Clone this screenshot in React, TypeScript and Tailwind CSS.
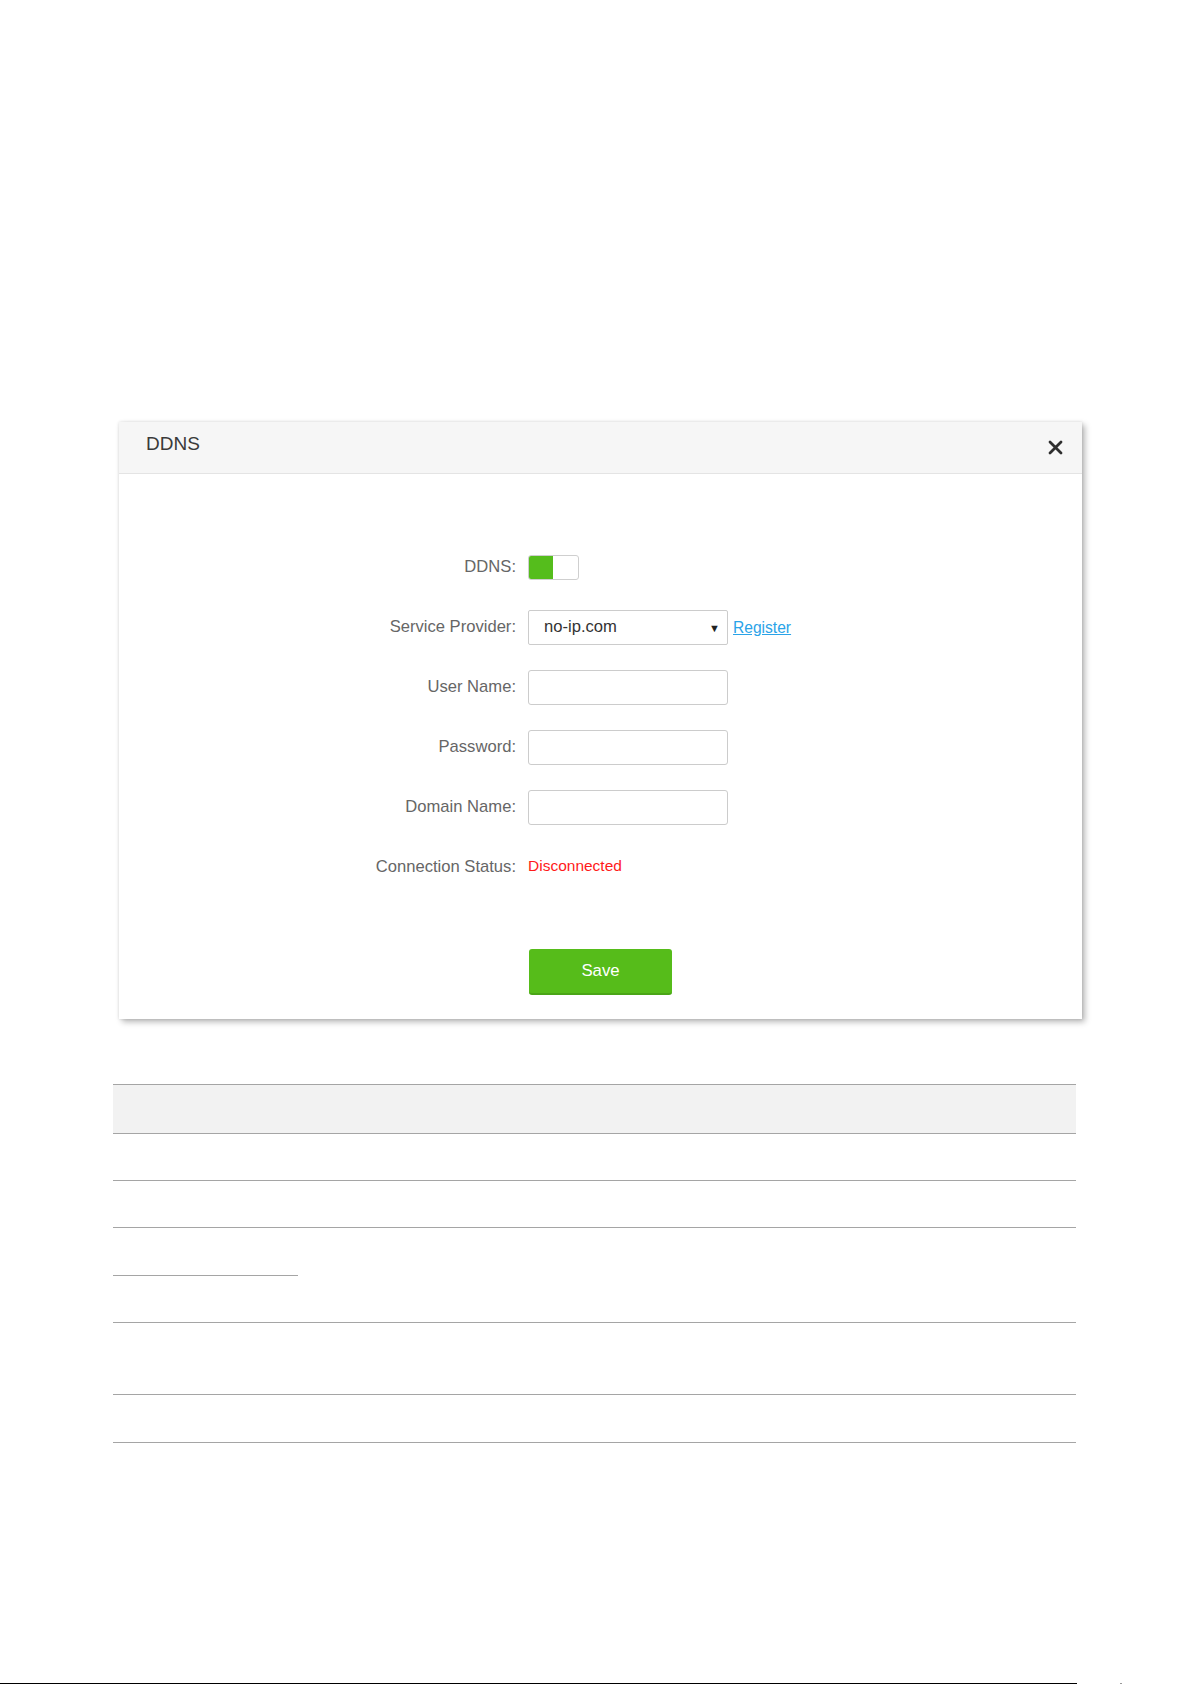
import { useState } from 'react'

const fields = [
  { label: 'User Name:', type: 'text' },
  { label: 'Password:', type: 'password' },
  { label: 'Domain Name:', type: 'text' }
]

function FormRow({ label, children }: { label: string; children: React.ReactNode }) {
  return (
    <div className="flex h-[35px] items-center">
      <label className="w-[397px] shrink-0 text-right text-[16.6px] text-[#666]">{label}</label>
      <div className="ml-[12px] flex items-center">{children}</div>
    </div>
  )
}

function DdnsDialog() {
  const [enabled, setEnabled] = useState(true)

  return (
    <div className="ml-[119px] w-[963px] bg-white shadow-[0_0_3px_rgba(0,0,0,0.12),3px_3px_6px_rgba(0,0,0,0.28)]">
      {/* Header */}
      <div className="flex h-[52px] items-center justify-between border-b border-[#e4e4e4] bg-[#f6f6f6] pl-[27px] pr-[19px]">
        <h2 className="-mt-[6px] text-[19px] text-[#3a3a3a]">DDNS</h2>
        <button className="flex h-[16px] w-[16px] items-center justify-center text-[#2e2e2e]">
          <svg width="15" height="15" viewBox="0 0 15 15">
            <path d="M2 2 L13 13 M13 2 L2 13" stroke="currentColor" strokeWidth="2.8" strokeLinecap="round" />
          </svg>
        </button>
      </div>

      {/* Form */}
      <div className="flex flex-col gap-[25px] pt-[76px]">
        <FormRow label="DDNS:">
          <button
            onClick={() => setEnabled(!enabled)}
            className="flex h-[25px] w-[51px] overflow-hidden rounded-[3px] border border-[#cfcfcf] bg-white"
          >
            <span className={enabled ? 'h-full w-[24px] bg-[#55bd1c]' : 'h-full w-[24px] bg-white'} />
          </button>
        </FormRow>

        <FormRow label="Service Provider:">
          <div className="relative flex h-[35px] w-[200px] items-center rounded-[2px] border border-[#cccccc] bg-white pl-[15px] text-[16.6px] text-[#333]">
            no-ip.com
            <span className="absolute right-[7px] top-[9px] text-[11px] text-[#222]">▼</span>
          </div>
          <a href="#" className="ml-[5px] text-[15.6px] text-[#2aa3e8] underline">Register</a>
        </FormRow>

        {fields.map((field) => (
          <FormRow key={field.label} label={field.label}>
            <input
              type={field.type}
              className="h-[35px] w-[200px] rounded-[3px] border border-[#cccccc] px-2 text-[16px] outline-none"
            />
          </FormRow>
        ))}

        <FormRow label="Connection Status:">
          <span className="-mt-[4px] text-[15.5px] text-[#ff1a1a]">Disconnected</span>
        </FormRow>
      </div>

      {/* Actions */}
      <div className="pb-[24px] pl-[410px] pt-[64px]">
        <button className="h-[46px] w-[143px] rounded-[3px] border-b-2 border-[#4aa517] bg-[#56bc1a] text-[16.8px] text-white">
          Save
        </button>
      </div>
    </div>
  )
}

function ParamTable() {
  const line = 'border-b border-[#a5a5a5]'
  return (
    <div className="ml-[113px] mt-[65px] w-[963px] border-t border-[#a5a5a5]">
      <div className={`h-[49px] bg-[#f2f2f2] ${line}`} />
      <div className={`h-[47px] ${line}`} />
      <div className={`h-[47px] ${line}`} />
      <div className={`flex ${line}`}>
        <div className="w-[185px]">
          <div className={`h-[48px] ${line}`} />
          <div className="h-[46px]" />
        </div>
        <div className="flex-1" />
      </div>
      <div className={`h-[72px] ${line}`} />
      <div className={`h-[48px] ${line}`} />
    </div>
  )
}

export default function App() {
  return (
    <div className="flex h-[1685px] w-[1192px] flex-col bg-white font-['Liberation_Sans',Arial,sans-serif]">
      <div className="h-[422px]" />
      <DdnsDialog />
      <ParamTable />
      {/* Page footer rule */}
      <div className="mt-auto flex items-end">
        <div className="h-[1px] w-[1077px] bg-black" />
        <div className="ml-[43px] h-[1px] w-[2px] bg-[#999]" />
      </div>
      <div className="h-[1px]" />
    </div>
  )
}
